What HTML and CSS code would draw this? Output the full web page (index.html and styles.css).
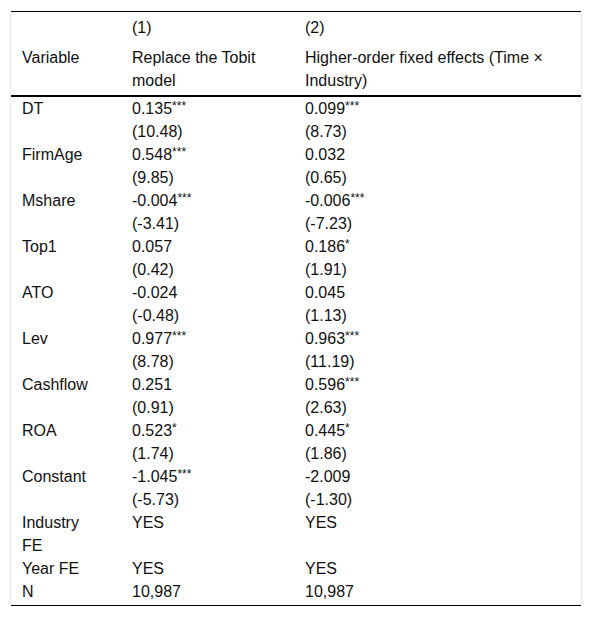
FILE: index.html
```html
<!DOCTYPE html>
<html lang="en">
<head>
    <meta charset="UTF-8">
    <meta name="viewport" content="width=device-width, initial-scale=1.0">
    <title>Robustness table</title>
    <link rel="stylesheet" href="styles.css">
</head>
<body>
    <div class="table_wrap">
        <table class="results">
            <colgroup>
                <col class="col_var">
                <col class="col_one">
                <col class="col_two">
            </colgroup>
            <thead>
                <tr class="num_row">
                    <th></th>
                    <th>(1)</th>
                    <th>(2)</th>
                </tr>
                <tr class="name_row">
                    <th>Variable</th>
                    <th>Replace the Tobit model</th>
                    <th>Higher-order fixed effects (Time × Industry)</th>
                </tr>
            </thead>
            <tbody>
                <tr><td>DT</td><td>0.135<sup>***</sup></td><td>0.099<sup>***</sup></td></tr>
                <tr><td></td><td>(10.48)</td><td>(8.73)</td></tr>
                <tr><td>FirmAge</td><td>0.548<sup>***</sup></td><td>0.032</td></tr>
                <tr><td></td><td>(9.85)</td><td>(0.65)</td></tr>
                <tr><td>Mshare</td><td>-0.004<sup>***</sup></td><td>-0.006<sup>***</sup></td></tr>
                <tr><td></td><td>(-3.41)</td><td>(-7.23)</td></tr>
                <tr><td>Top1</td><td>0.057</td><td>0.186<sup>*</sup></td></tr>
                <tr><td></td><td>(0.42)</td><td>(1.91)</td></tr>
                <tr><td>ATO</td><td>-0.024</td><td>0.045</td></tr>
                <tr><td></td><td>(-0.48)</td><td>(1.13)</td></tr>
                <tr><td>Lev</td><td>0.977<sup>***</sup></td><td>0.963<sup>***</sup></td></tr>
                <tr><td></td><td>(8.78)</td><td>(11.19)</td></tr>
                <tr><td>Cashflow</td><td>0.251</td><td>0.596<sup>***</sup></td></tr>
                <tr><td></td><td>(0.91)</td><td>(2.63)</td></tr>
                <tr><td>ROA</td><td>0.523<sup>*</sup></td><td>0.445<sup>*</sup></td></tr>
                <tr><td></td><td>(1.74)</td><td>(1.86)</td></tr>
                <tr><td>Constant</td><td>-1.045<sup>***</sup></td><td>-2.009</td></tr>
                <tr><td></td><td>(-5.73)</td><td>(-1.30)</td></tr>
                <tr><td>Industry FE</td><td>YES</td><td>YES</td></tr>
                <tr><td>Year FE</td><td>YES</td><td>YES</td></tr>
                <tr class="last_row"><td>N</td><td>10,987</td><td>10,987</td></tr>
            </tbody>
        </table>
    </div>
</body>
</html>
```

FILE: styles.css
```css
body {
    margin: 0;
    font-family: "Liberation Sans", Arial, sans-serif;
    font-size: 16px;
    color: #111;
    background-color: #fff;
}
.table_wrap {
    margin: 11px 10px;
    width: 570px;
    border-left: 1px solid #e8e8e8;
    border-right: 1px solid #e8e8e8;
}
.results {
    width: 100%;
    table-layout: fixed;
    border-collapse: separate;
    border-spacing: 0;
    border-top: 1px solid #000;
    border-bottom: 1px solid #000;
}
.col_var {
    width: 110px;
}
.col_one {
    width: 173px;
}
.results th,
.results td {
    text-align: left;
    vertical-align: top;
    font-weight: normal;
    line-height: 23px;
    padding: 0 30px 0 11px;
}
.results thead th {
    padding-top: 4px;
    padding-bottom: 3px;
}
.name_row th {
    border-bottom: 2px solid #000;
}
.last_row td {
    padding-bottom: 2px;
}
.results sup {
    font-size: 12px;
    line-height: 0;
    vertical-align: 4px;
}
```
